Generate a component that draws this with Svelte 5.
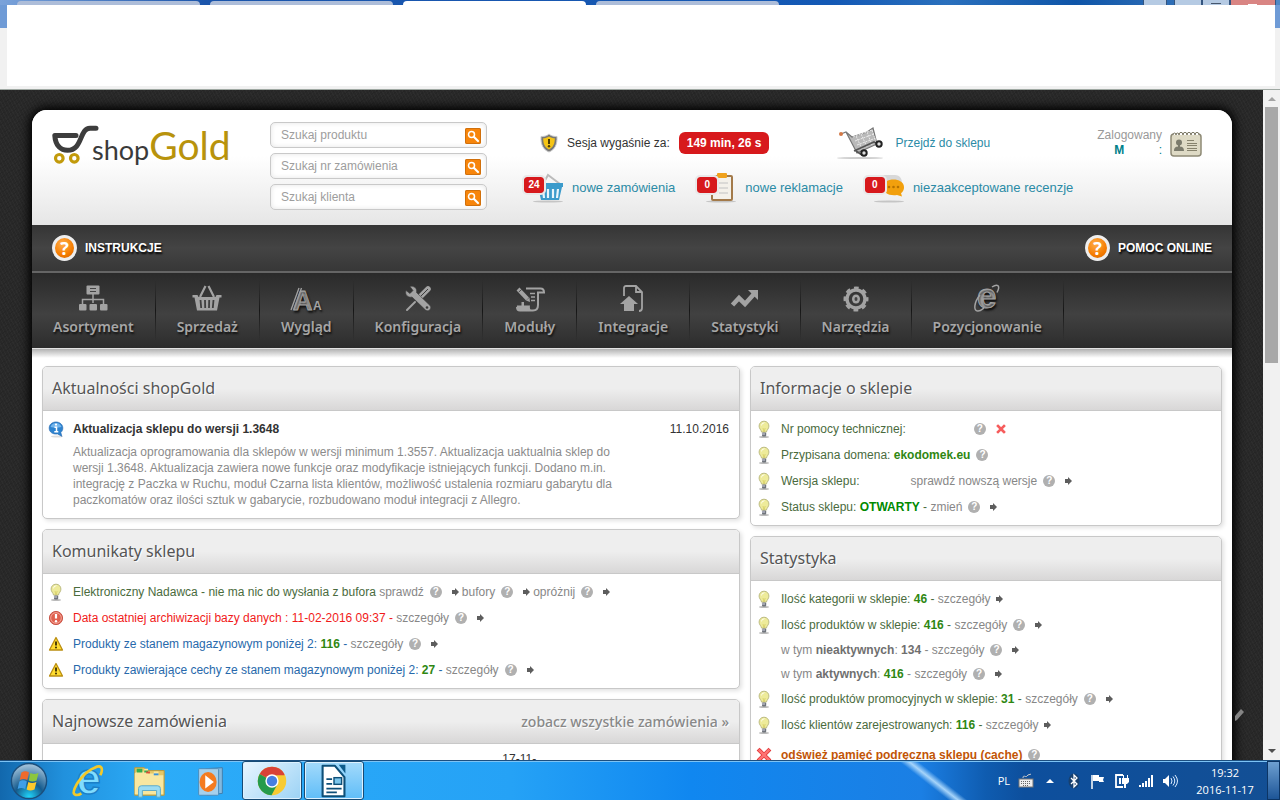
<script>
  const tabs = ["Karta 1", "Karta 2", "Karta 3", "Karta 4"];

  const searches = [
    { id: "product", label: "Szukaj produktu" },
    { id: "order", label: "Szukaj nr zamówienia" },
    { id: "client", label: "Szukaj klienta" },
  ];

  const counters = [
    { icon: "basket", count: 24, label: "nowe zamówienia" },
    { icon: "clipboard", count: 0, label: "nowe reklamacje" },
    { icon: "bubble", count: 0, label: "niezaakceptowane recenzje" },
  ];

  const menu = [
    "Asortyment",
    "Sprzedaż",
    "Wygląd",
    "Konfiguracja",
    "Moduły",
    "Integracje",
    "Statystyki",
    "Narzędzia",
    "Pozycjonowanie",
  ];

  // every row is an icon and a list of [kind, text] parts
  const messages = [
    {
      icon: "bulb",
      parts: [
        ["green", "Elektroniczny Nadawca - nie ma nic do wysłania z bufora "],
        ["link", "sprawdź"], ["help"], ["arrow"],
        ["link", "bufory"], ["help"], ["arrow"],
        ["link", "opróżnij"], ["help"], ["arrow"],
      ],
    },
    {
      icon: "error",
      parts: [
        ["red", "Data ostatniej archiwizacji bazy danych : 11-02-2016 09:37 - "],
        ["link", "szczegóły"], ["help"], ["arrow"],
      ],
    },
    {
      icon: "warning",
      parts: [
        ["blue", "Produkty ze stanem magazynowym poniżej 2: "],
        ["value", "116"], ["blue", " - "],
        ["link", "szczegóły"], ["help"], ["arrow"],
      ],
    },
    {
      icon: "warning",
      parts: [
        ["blue", "Produkty zawierające cechy ze stanem magazynowym poniżej 2: "],
        ["value", "27"], ["blue", " - "],
        ["link", "szczegóły"], ["help"], ["arrow"],
      ],
    },
  ];

  const info = [
    { icon: "bulb", parts: [["green", "Nr pomocy technicznej:"], ["blank"], ["help"], ["cross"]] },
    { icon: "bulb", parts: [["green", "Przypisana domena: "], ["value", "ekodomek.eu"], ["help"]] },
    {
      icon: "bulb",
      parts: [["green", "Wersja sklepu:"], ["blank short"], ["link", "sprawdź nowszą wersje"], ["help"], ["arrow"]],
    },
    {
      icon: "bulb",
      parts: [["green", "Status sklepu: "], ["open", "OTWARTY"], ["green", " - "], ["link", "zmień"], ["help"], ["arrow"]],
    },
  ];

  const stats = [
    {
      icon: "bulb",
      parts: [["green", "Ilość kategorii w sklepie: "], ["value", "46"], ["green", " - "], ["link", "szczegóły"], ["arrow near"]],
    },
    {
      icon: "bulb",
      parts: [["green", "Ilość produktów w sklepie: "], ["value", "416"], ["green", " - "], ["link", "szczegóły"], ["help"], ["arrow"]],
    },
    {
      sub: true,
      parts: [["grey", "w tym "], ["strong", "nieaktywnych"], ["grey", ": "], ["strong", "134"], ["grey", " - "], ["link", "szczegóły"], ["help"], ["arrow"]],
    },
    {
      sub: true,
      parts: [["grey", "w tym "], ["strong", "aktywnych"], ["grey", ": "], ["value", "416"], ["grey", " - "], ["link", "szczegóły"], ["help"], ["arrow"]],
    },
    {
      icon: "bulb",
      parts: [["green", "Ilość produktów promocyjnych w sklepie: "], ["value", "31"], ["green", " - "], ["link", "szczegóły"], ["help"], ["arrow"]],
    },
    {
      icon: "bulb",
      parts: [["green", "Ilość klientów zarejestrowanych: "], ["value", "116"], ["green", " - "], ["link", "szczegóły"], ["arrow near"]],
    },
    { icon: "cross", last: true, parts: [["cache", "odśwież pamięć podręczną sklepu (cache)"], ["help"]] },
  ];
</script>

{#snippet rowIcon(name)}
  <svg class="row-icon" viewBox="0 0 16 18">
    {#if name === "bulb"}
      <ellipse cx="8" cy="17" rx="5" ry="1" fill="#bbb" />
      <path d="M8 1.200c3 0 4.900 2.200 4.900 4.900 0 2.600-1.900 3.500-2.500 6H5.600c-.6-2.500-2.500-3.400-2.500-6C3.100 3.400 5 1.200 8 1.200z" fill="#eeeb9a" stroke="#bcbb82" />
      <path d="M6 3.500c1-1 2-1 3-.8-2 .6-3 1.500-3.300 3.300-.6-.8-.4-1.800.3-2.500z" fill="#fff" />
      <path d="M7 8l1 4 1.200-4" fill="none" stroke="#d6ce63" stroke-width=".8" />
      <rect x="6" y="12.500" width="4.200" height="4" rx="1" fill="#70757c" />
      <path d="M6 14h3" stroke="#dde" stroke-width=".9" />
    {:else if name === "error"}
      <circle cx="8" cy="9" r="6.600" fill="#e0614f" stroke="#c9564a" />
      <circle cx="8" cy="9" r="5.300" fill="none" stroke="#f3a79b" />
      <path d="M8 5v4.500" stroke="#fff" stroke-width="2.200" />
      <circle cx="8" cy="12.200" r="1.200" fill="#fff" />
    {:else if name === "warning"}
      <path d="M8 2.500L14.500 15h-13z" fill="#ffdc2e" stroke="#bb8e12" stroke-width="1.300" stroke-linejoin="round" />
      <path d="M8 6.500v4" stroke="#3b2c00" stroke-width="1.800" />
      <circle cx="8" cy="12.600" r="1" fill="#3b2c00" />
    {:else if name === "info"}
      <ellipse cx="9" cy="16.500" rx="6" ry="1" fill="#ddd" />
      <path d="M8 2c3.800 0 6.800 2.500 6.800 6 0 2-.8 3.400-2 4.500l1 3.800-4.200-2.400C4.500 14.600 1.200 12 1.200 8c0-3.500 3-6 6.800-6z" fill="#2d83cf" stroke="#2a6db4" stroke-width=".7" />
      <path d="M2.500 7C4 1.800 12 1.800 13.500 7 10 8 6 8 2.500 7z" fill="#74b6ed" />
      <path d="M6.500 7.200h2v4.300M6.300 11.800h4" fill="none" stroke="#fff" stroke-width="1.500" />
      <circle cx="8" cy="4.600" r="1.100" fill="#fff" />
    {:else}
      <path d="M3.500 4.500l9 9M12.500 4.500l-9 9" stroke="#e23b3b" stroke-width="4" stroke-linecap="square" />
      <path d="M3.500 4.500l9 9M12.500 4.500l-9 9" stroke="#ff7272" stroke-width="2.400" stroke-linecap="square" />
    {/if}
  </svg>
{/snippet}

{#snippet row(item)}
  <li class="row" class:sub={item.sub} class:last={item.last}>
    {#if item.icon}{@render rowIcon(item.icon)}{/if}
    {#each item.parts as [kind, text]}
      {#if kind === "help"}
        <button class="help" aria-label="Pomoc">?</button>
      {:else if kind.startsWith("arrow")}
        <svg class={kind} viewBox="0 0 7 8"><path d="M0 2h3V0l4 4-4 4V6H0z" fill="#5d5d5d" /></svg>
      {:else if kind === "cross"}
        <svg class="small-cross" viewBox="0 0 10 10"><path d="M2 2l6 6M8 2L2 8" stroke="#f65d5d" stroke-width="2.600" stroke-linecap="square" /></svg>
      {:else if kind === "link"}
        <a class="link" href="#szczegoly">{text}</a>
      {:else if kind === "cache"}
        <a class="cache" href="#cache">{text}</a>
      {:else}
        <span class={kind}>{text ?? ""}</span>
      {/if}
    {/each}
  </li>
{/snippet}

{#snippet menuIcon(name)}
  <svg class="menu-icon" viewBox="0 0 30 30" fill="#a3a3a3">
    {#if name === "Asortyment"}
      <rect x="8.500" y="1.500" width="13" height="9" rx="1" />
      <path d="M12 4.500h6M12 7.500h6" stroke="#444" />
      <path d="M15 10v9M4.500 20v-4.500h21V20" fill="none" stroke="#a3a3a3" stroke-width="1.500" />
      <rect x="1" y="20" width="7.500" height="6.500" rx="1" /><rect x="11.500" y="20" width="7.500" height="6.500" rx="1" /><rect x="22" y="20" width="7.500" height="6.500" rx="1" />
    {:else if name === "Sprzedaż"}
      <path d="M8 13l5.500-11M22 13L16.500 2" stroke="#a3a3a3" stroke-width="2.200" />
      <path d="M.5 11h5l1 2h17l1-2h5v2.500h-2L25 26.500H5L2.500 13.500h-2z" />
      <path d="M8.500 16l.7 8M13 16l.2 8M17.200 16l-.2 8M21.500 16l-.7 8" stroke="#3f3f3f" stroke-width="1.800" />
    {:else if name === "Wygląd"}
      <path d="M0 26L8 4M2.500 26L10.500 4" stroke="#a3a3a3" stroke-width="1.300" />
      <text x="2" y="26" font-family="Liberation Sans, sans-serif" font-weight="700" font-size="27" stroke="#a3a3a3" stroke-width=".8">A</text>
      <text x="22" y="26" font-family="Liberation Sans, sans-serif" font-weight="700" font-size="12">A</text>
    {:else if name === "Konfiguracja"}
      <path d="M4 26l8-8" stroke="#a3a3a3" stroke-width="2" stroke-linecap="round" />
      <path d="M18 12l7-7" stroke="#a3a3a3" stroke-width="5.500" stroke-linecap="round" />
      <path d="M18 12l7-7" stroke="#3c3c3c" stroke-width="1" />
      <path d="M7 2.500c4-1 7.500 2 6.500 6L27 21.500c2.500 3-1.500 7-4.500 4.500L9 13C5 14 1.500 10.500 3 6.500l4 3 3-3z" stroke="#3a3a3a" stroke-width=".6" />
      <circle cx="24" cy="23.500" r="1.300" fill="#3a3a3a" />
    {:else if name === "Moduły"}
      <path d="M11 4.500h14.500c2.500 0 3.500 1.500 3.500 4h-6V21c0 4-2 5.500-5 5.500H5c-2 0-3-1.500-3-3.500" fill="none" stroke="#a3a3a3" stroke-width="2" />
      <path d="M2 21.500h4.500V18h2.500v3.500h6c-.5 2 0 4 1.500 5.500H5c-2.500 0-3.500-2.500-3-5.500z" />
      <path d="M3 5l9.500 10" stroke="#a3a3a3" stroke-width="4" />
      <path d="M11 16.500l3.500-3 .5 4.500z" />
      <path d="M3.800 8l3-2.600" stroke="#3a3a3a" stroke-width=".8" />
      <path d="M15 9.500h5M16 13h4M16 16.500h4" stroke="#a3a3a3" stroke-width="1.300" />
    {:else if name === "Integracje"}
      <path d="M6 12V4c0-1.500 1-2 2-2h10l6 6v16c0 2-1 3-3 3M18 2v6h6" fill="none" stroke="#a3a3a3" stroke-width="1.800" />
      <path d="M11 12l9 8h-4v7H6v-7H2z" />
    {:else if name === "Statystyki"}
      <path d="M2.500 21l6.500-7 6 6 9-10" fill="none" stroke="#a3a3a3" stroke-width="4.600" />
      <path d="M18 6h10v10z" />
    {:else if name === "Narzędzia"}
      <circle cx="15" cy="15" r="9" fill="none" stroke="#a3a3a3" stroke-width="3.400" />
      <circle cx="15" cy="15" r="11" fill="none" stroke="#a3a3a3" stroke-width="3" stroke-dasharray="4.640 4" stroke-dashoffset="2.320" />
      <ellipse cx="15" cy="15" rx="4" ry="4.600" />
      <ellipse cx="15" cy="15" rx="1.500" ry="2" fill="#444" />
    {:else}
      <text x="5" y="24" font-family="Liberation Sans, sans-serif" font-weight="700" font-size="35" stroke="#a3a3a3" stroke-width="1">e</text>
      <path d="M25 8.500c4-7.500 0-9-5-5.500M8 11C2 18 1 27.500 6 27c2.500 0 4-1.500 6-3" fill="none" stroke="#a3a3a3" stroke-width="1.500" />
    {/if}
  </svg>
{/snippet}

{#snippet question()}
  <span class="question">?</span>
{/snippet}

<div class="screen">
  <header class="browser">
    <div class="tabs">
      {#each tabs as tab, i}
        <button class="tab" class:active={i === 2} aria-label={tab}></button>
      {/each}
      <div class="controls">
        <button class="control user" aria-label="Użytkownik"></button>
        <button class="control" aria-label="Minimalizuj"></button>
        <button class="control max" aria-label="Przywróć"></button>
        <button class="control close" aria-label="Zamknij"></button>
      </div>
    </div>
    <div class="address"></div>
  </header>

  <div class="viewport">
    <div class="page">
      <div class="shell">
        <div class="top">
          <a class="logo" href="#start" aria-label="shopGold">
            <svg viewBox="0 0 48 40">
              <path d="M24 10.500H2.800C3.500 21 9 25.300 15.500 25.300 31 25.300 27 3.500 38 3.200H44" fill="none" stroke="#3d3d3d" stroke-width="5" stroke-linecap="round" stroke-linejoin="round" />
              <circle cx="7.300" cy="33.300" r="3.800" fill="none" stroke="#c29a0b" stroke-width="3.200" />
              <circle cx="22.300" cy="33.300" r="3.800" fill="none" stroke="#c29a0b" stroke-width="3.200" />
            </svg>
            <span class="shop">shop</span><span class="gold">Gold</span>
          </a>

          <form class="searches">
            {#each searches as search}
              <div class="search">
                <input id={search.id} type="text" placeholder={search.label} aria-label={search.label} />
                <button type="button" aria-label={search.label}>
                  <svg viewBox="0 0 16 16">
                    <circle cx="6.500" cy="6.500" r="3" fill="none" stroke="#fff" stroke-width="1.500" />
                    <path d="M9 9l4 4" stroke="#fff" stroke-width="2.200" stroke-linecap="round" />
                  </svg>
                </button>
              </div>
            {/each}
          </form>

          <div class="status">
            <div class="session">
              <svg class="shield" viewBox="0 0 18 20">
                <path d="M9 1c2 2 4.500 2.500 8 2.500.3 8-2 13-8 15.500C3 16.500.7 11.500 1 3.500 4.500 3.500 7 3 9 1z" fill="#777" stroke="#c9c9c9" />
                <path d="M9 3.500c2 1.300 3.600 1.700 5.800 1.800 0 5.500-1.500 9-5.800 11.200C4.700 14.300 3.200 10.800 3.200 5.300 5.400 5.200 7 4.800 9 3.500z" fill="#f5c414" />
                <path d="M9 6v5" stroke="#4b3c00" stroke-width="2" />
                <circle cx="9" cy="13.200" r="1.200" fill="#4b3c00" />
              </svg>
              <span>Sesja wygaśnie za:</span>
              <strong class="time">149 min, 26 s</strong>
              <a class="shop-link" href="#sklep">
                <svg viewBox="0 0 48 34">
                  <ellipse cx="24" cy="32" rx="23" ry="1" fill="#ccc" />
                  <path d="M5 8l5-2 6 5 15-5 6-4 4 16-20 9L10 6" fill="#b9b9b9" stroke="#777" stroke-width="1.200" />
                  <path d="M17 11l19-7M19 15l19-7M21 19l19-7M22 23l19-8M20 10l6 13M25 8l6 13M31 6l5 13M36 4l4 12" stroke="#eee" stroke-width=".9" stroke-dasharray="2 1" />
                  <path d="M18 25l20-9 6 3M20 25l6 4" fill="none" stroke="#555" stroke-width="1.600" />
                  <circle cx="5" cy="8" r="2" fill="#d27845" />
                  <circle cx="28" cy="27" r="2.700" fill="#ddd" stroke="#222" stroke-width="2" />
                  <circle cx="43" cy="18" r="2.700" fill="#ddd" stroke="#222" stroke-width="2" />
                </svg>
                Przejdź do sklepu
              </a>
            </div>
            <div class="counters">
              {#each counters as counter}
                <a href="#{counter.icon}">
                  <span class="counter-icon">
                    <svg viewBox="0 0 42 30">
                      <ellipse cx="25" cy="28.500" rx="15" ry="1" fill="#c5c5c5" />
                      {#if counter.icon === "basket"}
                        <path d="M20 11l5-9 12 9" fill="none" stroke="#bbb" stroke-width="2" />
                        <path d="M14 10h26v4h-1l-3 13H18l-3-13h-1z" fill="#3c9bcb" />
                        <path d="M20 16l1 9M25 16v9M30 16v9M35 16l-1 9" stroke="#e9f5fb" stroke-width="2.200" />
                      {:else if counter.icon === "clipboard"}
                        <rect x="16" y="3" width="20" height="24" rx="1" fill="#f4f1ea" stroke="#a37a4a" stroke-width="2" />
                        <rect x="21" y="0" width="10" height="5" rx="1" fill="#f0a21c" />
                        <path d="M23 10h9M23 15h9M23 20h9" stroke="#c2c2c2" />
                      {:else}
                        <path d="M18 2h13c5 0 7 4 7 8v10H16l3-4z" fill="#d8d8d8" />
                        <path d="M19 14c0-10 21-10 21 0 0 4-2 5.500-3 6l1 3.500-5-1.500c-8 1-14-2-14-8z" fill="#f2a00d" />
                        <circle cx="25" cy="14" r="1.300" fill="#b77200" /><circle cx="29.500" cy="14" r="1.300" fill="#b77200" /><circle cx="34" cy="14" r="1.300" fill="#b77200" />
                      {/if}
                    </svg>
                    <b>{counter.count}</b>
                  </span>
                  {counter.label}
                </a>
              {/each}
            </div>
          </div>

          <div class="account">
            <div class="who">
              <div>Zalogowany</div>
              <div class="name"><b>M</b><span>:</span></div>
            </div>
            <svg viewBox="0 0 32 26">
              <rect x="1" y="3" width="30" height="22" rx="3" fill="#dedac5" stroke="#8e8a76" stroke-width="1.500" />
              <path d="M3 4a1.500 2 0 1 1 3 0a1.500 2 0 1 1 3 0a1.500 2 0 1 1 4 0a1.500 2 0 1 1 4 0a1.500 2 0 1 1 4 0a1.500 2 0 1 1 4 0a1.500 2 0 1 1 4 0" fill="#fff" stroke="#77735f" />
              <circle cx="9" cy="11.500" r="3" fill="#7b7b6c" />
              <path d="M4 20c0-4 2-4 4-4.500v-2h2v2c2 .5 4 .5 4 4.500z" fill="#7b7b6c" />
              <path d="M17 9.500h7M17 12.500h10M17 14.500h10M17 17.500h10M17 19.500h10" stroke="#86826c" />
            </svg>
          </div>
        </div>

        <div class="help-bar">
          <a href="#instrukcje">{@render question()}INSTRUKCJE</a>
          <a href="#pomoc">{@render question()}POMOC ONLINE</a>
        </div>

        <nav class="menu">
          {#each menu as item}
            <a href="#{item}">{@render menuIcon(item)}<span>{item}</span></a>
          {/each}
        </nav>

        <main class="content">
          <div class="column">
            <section class="panel">
              <h2>Aktualności shopGold</h2>
              <div class="body">
                <div class="row news-title">
                  {@render rowIcon("info")}
                  <strong>Aktualizacja sklepu do wersji 1.3648</strong>
                  <time>11.10.2016</time>
                </div>
                <p>
                  Aktualizacja oprogramowania dla sklepów w wersji minimum 1.3557. Aktualizacja uaktualnia sklep do
                  wersji 1.3648. Aktualizacja zawiera nowe funkcje oraz modyfikacje istniejących funkcji. Dodano m.in.
                  integrację z Paczka w Ruchu, moduł Czarna lista klientów, możliwość ustalenia rozmiaru gabarytu dla
                  paczkomatów oraz ilości sztuk w gabarycie, rozbudowano moduł integracji z Allegro.
                </p>
              </div>
            </section>
            <section class="panel">
              <h2>Komunikaty sklepu</h2>
              <ul class="body">
                {#each messages as item}{@render row(item)}{/each}
              </ul>
            </section>
            <section class="panel">
              <h2>Najnowsze zamówienia <a href="#zamowienia">zobacz wszystkie zamówienia »</a></h2>
              <table>
                <tbody>
                  <tr><td></td><td class="date">17-11-</td></tr>
                </tbody>
              </table>
            </section>
          </div>
          <div class="column">
            <section class="panel">
              <h2>Informacje o sklepie</h2>
              <ul class="body">
                {#each info as item}{@render row(item)}{/each}
              </ul>
            </section>
            <section class="panel">
              <h2>Statystyka</h2>
              <ul class="body">
                {#each stats as item}{@render row(item)}{/each}
              </ul>
            </section>
          </div>
        </main>
      </div>
      <svg class="pencil" viewBox="0 0 10 12"><path d="M0 7l6-7 3 3-7 8-2 1z" fill="#858585" /></svg>
    </div>
    <div class="scrollbar">
      <svg viewBox="0 0 8 4"><path d="M0 4l4-4 4 4z" fill="#a3a3a3" /></svg>
      <div class="thumb"></div>
      <svg viewBox="0 0 8 4"><path d="M0 0l4 4 4-4z" fill="#505050" /></svg>
    </div>
  </div>

  <footer class="taskbar">
    <button class="task" aria-label="Start">
      <svg viewBox="0 0 40 40">
        <defs>
          <radialGradient id="orb" cx=".5" cy=".95" r=".9"><stop offset="0" stop-color="#20d5fa" /><stop offset=".45" stop-color="#145b8e" /><stop offset="1" stop-color="#9fbfd8" /></radialGradient>
        </defs>
        <circle cx="20" cy="20" r="18.500" fill="url(#orb)" stroke="#1b4f7d" stroke-width="1.500" />
        <path d="M12 11c3.500-2 5.500-1.500 8 0l-1.800 8c-3-1.500-5-1.500-8 0z" fill="#ee6a2c" />
        <path d="M21.500 11.500c3 1.500 5 1.500 8.500 0l-2 8c-3.500 1.500-5.500 1.500-8.300 0z" fill="#8cc63e" />
        <path d="M9.800 20.500c3.500-2 5.500-1.500 8 0l-1.800 8c-3-1.500-5-1.500-8 0z" fill="#3f9fe8" />
        <path d="M19.300 21c3 1.500 5 1.500 8.500 0l-2 8c-3.500 1.500-5.500 1.500-8.300 0z" fill="#fdc92c" />
      </svg>
    </button>
    <button class="task" aria-label="Internet Explorer">
      <svg viewBox="0 0 40 40">
        <text x="8" y="34" font-family="Liberation Sans, sans-serif" font-weight="700" font-size="46" fill="#7fdcff" stroke="#1b7fc8" stroke-width="1.500">e</text>
        <path d="M33 14c4-9 0-11-6-8C17 10 7 22 5 31c-1 4 4 5 8 2" fill="none" stroke="#f3c92a" stroke-width="2.800" />
      </svg>
    </button>
    <button class="task" aria-label="Eksplorator">
      <svg viewBox="0 0 40 40">
        <path d="M5 6h10l2 3h19v26H5z" fill="#e5c766" stroke="#b8983c" />
        <path d="M7 10h8v-3h4v5h6v-2h5v4h5v20H5V12z" fill="#f8e7a0" />
        <path d="M8 8h4v2H8zM15 10h4" fill="#35ad4e" stroke="#35ad4e" stroke-width="2" />
        <path d="M17 11h4" stroke="#d94e37" stroke-width="2" />
        <path d="M25 13h5" stroke="#3a91d9" stroke-width="2" />
        <path d="M9 37v-9q0-3 3-3h17q3 0 3 3v9h-4v-7H13v7z" fill="#9bdcf3" stroke="#5ba9c8" />
      </svg>
    </button>
    <button class="task" aria-label="Odtwarzacz">
      <svg viewBox="0 0 40 40">
        <path d="M16 7l17-1v27l-16 2z" fill="#82b9df" stroke="#3f7cac" />
        <rect x="8" y="7" width="21" height="28" rx="1" fill="#a6d0ec" stroke="#4b8cba" />
        <ellipse cx="18" cy="21" rx="9" ry="10.500" fill="#f47b20" />
        <path d="M15 14v14l9-7z" fill="#fff" />
      </svg>
    </button>
    <button class="task open" aria-label="Chrome">
      <svg viewBox="0 0 40 40">
        <circle cx="20" cy="20" r="15" fill="#f7cb33" />
        <path d="M20 20L7 12.500A15 15 0 0 1 33 12.500V14H20z" fill="#d94236" />
        <path d="M20 20L7 12.500A15 15 0 0 0 19.500 35L26 23z" fill="#259b4c" />
        <circle cx="20" cy="20" r="7" fill="#fff" /><circle cx="20" cy="20" r="5.500" fill="#477fe0" />
      </svg>
    </button>
    <button class="task open soft" aria-label="Writer">
      <svg viewBox="0 0 40 40">
        <path d="M8 4h13l10 12v20H8z" fill="#fff" stroke="#0d4f78" stroke-width="2.200" stroke-linejoin="round" />
        <path d="M25 3h7v9z" fill="#0d5c8c" />
        <path d="M12 18h6M12 23h6M12 28h16M12 32h11" stroke="#0d4f78" stroke-width="2" />
        <rect x="20" y="16.500" width="8" height="7" fill="#7cc6ec" stroke="#0d4f78" stroke-width="1.500" />
      </svg>
    </button>

    <div class="tray">
      <span>PL</span>
      <svg viewBox="0 0 16 16"><path d="M5 5c0-4 3 0 4-2s3-1 4-2" fill="none" stroke="#ccc" /><rect x="1" y="6" width="14" height="8" fill="#eee" stroke="#777" /><path d="M3 8.500h10M3 10.500h10M5 12.500h6" stroke="#666" stroke-dasharray="1 1" /></svg>
      <svg viewBox="0 0 16 16"><path d="M4 10l4-4 4 4z" fill="#fff" /></svg>
      <svg viewBox="0 0 16 16"><ellipse cx="8" cy="8" rx="5.500" ry="7.500" fill="#17406f" /><path d="M5 5l6 6-3 3V2l3 3-6 6" fill="none" stroke="#fff" stroke-width="1.300" /></svg>
      <svg viewBox="0 0 16 16"><path d="M2 2v14" stroke="#fff" stroke-width="1.500" /><path d="M3 2h6v2h5l-1 3 1 2H9V8H3z" fill="#fff" /></svg>
      <svg viewBox="0 0 16 16"><path d="M9 2H2v12h7" fill="none" stroke="#fff" stroke-width="1.800" /><path d="M5 5h2v6H5zM8 5h7v4l-2 2h-1v4h-2v-4H8zM9 2h1v3H9zM13 2h1v3h-1z" fill="#fff" /></svg>
      <svg viewBox="0 0 16 16"><path d="M1 12h2v2H1zM4 10h2v4H4zM7 8h2v6H7zM10 5h2v9h-2zM13 2h2v12h-2z" fill="#fff" /></svg>
      <svg viewBox="0 0 16 16"><path d="M1 6h2l4-4v12l-4-4H1z" fill="#fff" /><path d="M9 5q2 3 0 6M11 3.500q3.500 4.500 0 9M13 2q5 6 0 12" fill="none" stroke="#dcecff" /></svg>
    </div>
    <div class="clock"><span>19:32</span><span>2016-11-17</span></div>
    <button class="desktop" aria-label="Pokaż pulpit"></button>
  </footer>
</div>

<style>
  :global(body) {
    margin: 0;
  }
  .screen {
    display: grid;
    grid-template-rows: auto 1fr auto;
    height: 100vh;
    overflow: hidden;
    font-family: "Liberation Sans", Arial, sans-serif;
    font-size: 12px;
    line-height: 16px;
    color: #333;
  }
  a {
    text-decoration: none;
    color: inherit;
  }
  button {
    border: 0;
    padding: 0;
    background: none;
    font: inherit;
  }
  svg {
    display: block;
    flex: none;
    overflow: visible;
  }

  /* browser window */
  .browser {
    background: linear-gradient(#6f9bd6 28px, #f1f1f1 28px);
    border-bottom: 1px solid #9fa8a2;
  }
  .tabs {
    display: flex;
    gap: 10px;
    height: 5px;
    padding-left: 17px;
    background: linear-gradient(90deg, #7ba3da, #1b55ab 16%, #1459b5 65%, #2a70bd 74%, #0f55a8 84%, #5089c5);
  }
  .tab {
    width: 183px;
    margin-top: 1px;
    border-radius: 4px 4px 0 0;
    background: #adbdd9;
  }
  .tab.active {
    background: #fff;
  }
  .controls {
    display: flex;
    margin-left: auto;
    margin-right: 4px;
  }
  .control {
    width: 28px;
    background: #b5cae3;
    border: solid #34557f;
    border-width: 0 1px;
  }
  .control.user {
    width: 24px;
    margin-right: 7px;
  }
  .control.max {
    background: linear-gradient(90deg, transparent 30%, #46566c 30% 70%, transparent 70%) 0 3px / 100% 1px no-repeat #b5cae3;
  }
  .control.close {
    width: 46px;
    background: linear-gradient(90deg, transparent 38%, #fff 38% 60%, transparent 60%) 0 4px / 100% 1px no-repeat #d98583;
  }
  .address {
    height: 81px;
    margin: 0 5px 3px 7px;
    background: #fff;
  }

  .viewport {
    display: flex;
    min-height: 0;
    overflow: hidden;
  }
  .page {
    position: relative;
    flex: 1;
    padding: 20px 31px 0 32px;
    overflow: hidden;
    background:
      repeating-linear-gradient(62deg, #ffffff06 0 1px, transparent 1px 3px),
      repeating-linear-gradient(-35deg, #00000014 0 1px, transparent 1px 4px),
      #282828;
  }
  .pencil {
    position: absolute;
    right: 18px;
    top: 619px;
    width: 10px;
    height: 12px;
  }
  .scrollbar {
    display: flex;
    flex-direction: column;
    align-items: center;
    width: 17px;
    padding: 7px 0;
    box-sizing: border-box;
    background: #f1f1f1;
  }
  .scrollbar svg {
    width: 8px;
    height: 4px;
  }
  .thumb {
    width: 13px;
    height: 39%;
    margin: 6px 0 auto;
    background: #a8a8a8;
  }

  .shell {
    border-radius: 15px 15px 0 0;
    box-shadow: 0 0 10px 3px #000;
    background: #fff;
  }

  /* logo, search and session */
  .top {
    display: flex;
    padding: 12px 30px 15px 20px;
    border-radius: 15px 15px 0 0;
    background: linear-gradient(#fff 40%, #e6e6e6);
  }
  .logo {
    display: flex;
    align-items: baseline;
    width: 218px;
    height: 46px;
    font-family: Lato, sans-serif;
    line-height: 46px;
  }
  .logo svg {
    width: 48px;
    height: 40px;
    margin-right: -8px;
    align-self: center;
  }
  .shop {
    font-size: 27px;
    color: #3a3a3a;
  }
  .gold {
    font-size: 39px;
    color: #b8930c;
  }
  .searches {
    display: flex;
    flex-direction: column;
    gap: 5px;
    width: 217px;
  }
  .search {
    display: flex;
    align-items: center;
    height: 26px;
    box-sizing: border-box;
    padding: 0 5px 0 10px;
    border: 1px solid #c9c9c9;
    border-radius: 5px;
    background: #fff;
    box-shadow: inset 0 0 5px #e4e4e4;
  }
  .search input {
    flex: 1;
    min-width: 0;
    padding: 0;
    border: 0;
    outline: 0;
    background: none;
    font: inherit;
  }
  .search input::placeholder {
    color: #9d9d9d;
  }
  .search button {
    width: 16px;
    height: 16px;
    margin-top: 2px;
    border-radius: 2px;
    background: #f7850b;
    box-shadow: inset 0 0 0 1px #d0700c;
  }
  .status {
    flex: 1;
    margin-left: 36px;
  }
  .session {
    display: flex;
    align-items: center;
    height: 42px;
    padding-left: 17px;
  }
  .shield {
    width: 18px;
    height: 20px;
    margin-right: 9px;
  }
  .time {
    margin-left: 9px;
    padding: 3px 8px;
    border-radius: 6px;
    background: #d7191c;
    color: #fff;
  }
  .shop-link {
    display: flex;
    align-items: center;
    gap: 11px;
    margin-left: 67px;
    color: #2b8ba6;
  }
  .shop-link svg {
    width: 48px;
    height: 34px;
  }
  .counters {
    display: flex;
    gap: 21px;
    margin-top: 9px;
    font-size: 13px;
  }
  .counters a {
    display: flex;
    align-items: center;
    gap: 7px;
    height: 30px;
    color: #2b8ba6;
    white-space: nowrap;
  }
  .counter-icon {
    position: relative;
    width: 42px;
    height: 30px;
  }
  .counter-icon b {
    position: absolute;
    left: -1px;
    top: 2px;
    width: 20px;
    border: 2px solid #e9e9e9;
    border-radius: 5px;
    background: #d7191c;
    background-clip: padding-box;
    color: #fff;
    font-size: 10px;
    line-height: 16px;
    text-align: center;
  }
  .account {
    display: flex;
    align-items: flex-start;
    gap: 8px;
    padding-top: 6px;
    color: #999;
  }
  .account svg {
    width: 32px;
    height: 26px;
    margin-top: 3px;
  }
  .who {
    line-height: 15px;
  }
  .name {
    display: flex;
    justify-content: space-between;
    padding-left: 17px;
    color: #00808a;
  }

  .help-bar {
    display: flex;
    justify-content: space-between;
    padding: 10px 20px;
    border-bottom: 2px solid #656565;
    background: linear-gradient(#353535, #444 50%, #373737);
  }
  .help-bar a {
    display: flex;
    align-items: center;
    gap: 8px;
    color: #fff;
    font-weight: 700;
    text-shadow: 1px 2px 2px #000;
  }
  .question {
    width: 19px;
    border: 3px solid #eee;
    border-radius: 50%;
    background: radial-gradient(circle at 40% 30%, #ffae4a, #f57c00 60%, #d06000);
    font-family: "Open Sans", sans-serif;
    font-size: 18px;
    line-height: 20px;
    text-align: center;
    text-shadow: none;
  }

  .menu {
    display: flex;
    height: 75px;
    background: linear-gradient(#2a2a2a, #414141 55%, #2c2c2c);
  }
  .menu a {
    display: flex;
    flex-direction: column;
    align-items: center;
    gap: 3px;
    padding: 11px 21px 0;
    border-right: 1px solid;
    border-image: linear-gradient(transparent 10%, #161616 50%, transparent 90%) 1;
    font-family: "Noto Sans", "Open Sans", sans-serif;
    font-size: 14px;
    font-weight: 600;
    line-height: 20px;
    color: #a6a6a6;
    text-shadow: 1px 2px 2px #111;
  }
  .menu-icon {
    width: 30px;
    height: 30px;
  }

  .content {
    display: grid;
    grid-template-columns: 698fr 472fr;
    gap: 10px;
    padding: 18px 10px;
    background: linear-gradient(#e2e2e2 1px, #b2b2b2 1px, #fff 10px);
  }
  .column {
    display: flex;
    flex-direction: column;
    gap: 10px;
    min-width: 0;
  }
  .panel {
    border: 1px solid #c8c8c8;
    border-radius: 5px;
    background: #fff;
    box-shadow: 2px 2px 4px #e2e2e2;
    overflow: hidden;
  }
  h2 {
    display: flex;
    justify-content: space-between;
    margin: 0;
    padding: 0 10px 0 9px;
    border-bottom: 1px solid #c8c8c8;
    background: linear-gradient(#eee 50%, #d8d7d7);
    font-family: "Noto Sans", "Open Sans", sans-serif;
    font-size: 16px;
    font-weight: 400;
    line-height: 43px;
    color: #555;
    text-shadow: 1px 1px 1px #fff;
  }
  h2 a {
    font-size: 14px;
    font-weight: 500;
    color: #888;
  }
  .body {
    margin: 0;
    padding: 5px 0;
    list-style: none;
  }
  .body p {
    max-width: 560px;
    margin: 2px 0 5px 30px;
    color: #8b8b8b;
  }
  .row {
    display: flex;
    align-items: center;
    height: 26px;
    padding-left: 5px;
    white-space: pre;
  }
  .row.sub {
    height: 24px;
    padding-left: 30px;
  }
  .row.last {
    margin-top: 4px;
  }
  .news-title time {
    margin: 0 10px 0 auto;
  }
  .row-icon {
    width: 16px;
    height: 18px;
    margin-right: 9px;
  }
  .help {
    width: 12px;
    height: 12px;
    margin: 0 10px 0 6px;
    border-radius: 50%;
    background: #b0b0b0;
    color: #fff;
    font-size: 10px;
    font-weight: 700;
    line-height: 12px;
    text-align: center;
  }
  .arrow {
    width: 7px;
    height: 8px;
    margin-right: 3px;
  }
  .near {
    margin-left: 6px;
  }
  .small-cross {
    width: 10px;
    height: 10px;
  }
  .blank {
    width: 62px;
  }
  .blank.short {
    width: 51px;
  }
  .green {
    color: #4a6b3d;
  }
  .red {
    color: #f11a1a;
  }
  .blue {
    color: #2769ab;
  }
  .value {
    color: #2f8712;
    font-weight: 700;
  }
  .open {
    color: #008a00;
    font-weight: 700;
  }
  .link,
  .grey {
    color: #878787;
  }
  .strong {
    color: #6f6f6f;
    font-weight: 700;
  }
  .cache {
    color: #c25405;
    font-weight: 700;
  }
  table {
    width: 100%;
    border-collapse: collapse;
  }
  td {
    width: 66%;
    padding: 7px 0;
  }
  td.date {
    width: auto;
  }

  .taskbar {
    display: flex;
    align-items: center;
    height: 40px;
    box-sizing: border-box;
    border-top: 1px solid #1c4f80;
    box-shadow: inset 0 1px 0 #7cc3f5;
    background:
      linear-gradient(38deg, transparent 44%, #a6d4fa 50%, transparent 56%) 878px 0 / 110px 100% no-repeat,
      linear-gradient(90deg, #1268ad, #2191dd 5%, #2cacf8 12%, #25a2f6 40%, #1087f0 54%, #1b7fe4 72%, #0f5cb0 77%, #0d4f9d 80%, #134f94);
  }
  .task {
    display: grid;
    place-items: center;
    width: 61px;
    height: 39px;
  }
  .task:first-child {
    width: 57px;
  }
  .task svg {
    width: 38px;
    height: 38px;
  }
  .task.open {
    width: 60px;
    margin-left: 2px;
    box-sizing: border-box;
    border: 1px solid #174b75;
    border-radius: 3px;
    background: linear-gradient(135deg, #e9f6ff, #9bd2f5);
    box-shadow: inset 0 0 0 1px #ddf1ff;
    outline: 0;
  }
  .task.open.soft {
    background: linear-gradient(#a3dafb, #5fbdf8);
  }
  .tray {
    display: flex;
    align-items: center;
    gap: 8px;
    margin: 0 5px 0 auto;
    font-family: "Open Sans", sans-serif;
    font-size: 11px;
    color: #fff;
  }
  .tray svg {
    width: 16px;
    height: 16px;
  }
  .clock {
    display: flex;
    flex-direction: column;
    width: 84px;
    font-family: "Open Sans", sans-serif;
    font-size: 11px;
    line-height: 17px;
    text-align: center;
    color: #fff;
  }
  .desktop {
    width: 13px;
    height: 39px;
    border: 1px solid #0c3565;
    background: linear-gradient(#6d9fd0, #1d5597);
  }
</style>
